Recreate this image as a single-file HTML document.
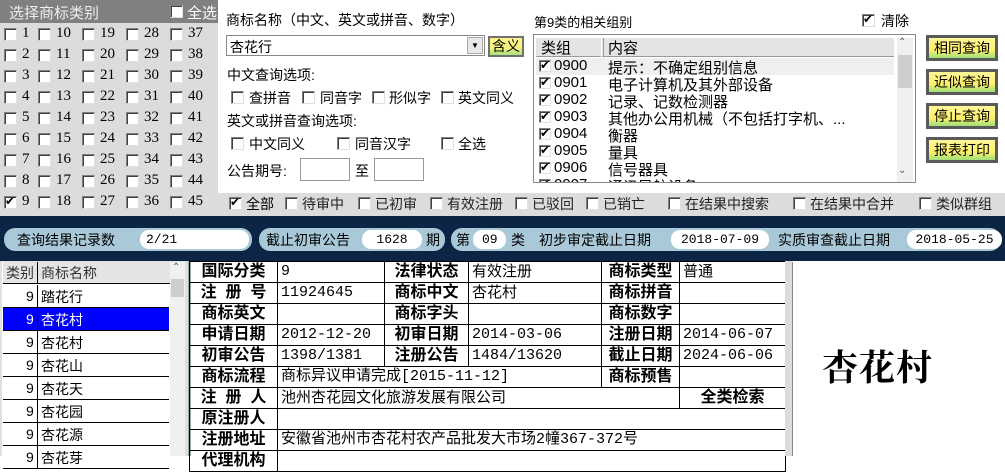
<!DOCTYPE html>
<html><head><meta charset="utf-8"><style>
*{margin:0;padding:0;box-sizing:border-box}
body{width:1005px;height:456px;overflow:hidden;position:relative;background:#fff;font-family:"Liberation Sans","Noto Sans CJK SC",sans-serif;font-size:14px;color:#000}
.a{position:absolute;white-space:nowrap}
.cb{position:absolute;width:13px;height:13px;border:1px solid #808080;border-right-color:#e0e0e0;border-bottom-color:#e0e0e0;background:#fff;box-shadow:inset 1px 1px 0 #404040}
.cb.k::after{content:"✔";position:absolute;left:0;top:-3px;font-size:12px;font-family:"DejaVu Sans",sans-serif}
.num{position:absolute;font-family:"Liberation Serif",serif;font-size:15px}
.btn{position:absolute;left:926px;width:72px;height:26px;border:3px solid #5a5a5a;background:linear-gradient(#fff79a,#fff06a 60%,#9fe07a);text-align:center;line-height:20px;font-size:14px}
.pill{position:absolute;top:228px;height:23px;background:#a9c9d9;border-radius:11px}
.fld{position:absolute;top:230px;height:19px;background:#fff;border-radius:9px;font-family:"Liberation Mono",monospace;font-size:13px;line-height:19px}
table{position:absolute;border-collapse:collapse;table-layout:fixed}
tr{height:21px}
td{border:1px solid #000;height:21px;line-height:18px;padding:0 3px;font-size:15px;white-space:nowrap;overflow:hidden}
td.l{font-weight:bold;font-size:16px;text-align:center;padding:0}
.mono{font-family:"Liberation Mono","Noto Sans CJK SC",monospace;font-size:15px}
</style></head><body>
<div class="a" style="left:0;top:0;width:218px;height:216px;background:#dcdcdc"></div>
<div class="a" style="left:0;top:0;width:218px;height:23px;background:#808080"></div>
<div class="a" style="left:9px;top:2px;color:#eee;font-size:15px">选择商标类别</div>
<div class="cb" style="left:170px;top:5px"></div>
<div class="a" style="left:187px;top:2px;color:#fff;font-size:15px">全选</div>
<div id="grid"></div>
<div class="a" style="left:226px;top:10px">商标名称（中文、英文或拼音、数字）</div>
<div class="a" style="left:226px;top:35px;width:259px;height:21px;border:1px solid #888;background:#fff"><span style="position:absolute;left:3px;top:1px">杏花行</span><span style="position:absolute;right:1px;top:1px;width:16px;height:17px;background:#e8e8e8;border:1px solid #aaa;font-size:8px;text-align:center;line-height:16px">▼</span></div>
<div class="a" style="left:488px;top:36px;width:36px;height:21px;border:2px solid #707070;background:linear-gradient(#fff48a,#f5f080 60%,#a8e080);text-align:center;line-height:17px">含义</div>
<div class="a" style="left:227px;top:65px">中文查询选项:</div>
<div class="cb" style="left:231px;top:91px"></div><div class="a" style="left:249px;top:88px">查拼音</div>
<div class="cb" style="left:302px;top:91px"></div><div class="a" style="left:320px;top:88px">同音字</div>
<div class="cb" style="left:372px;top:91px"></div><div class="a" style="left:389px;top:88px">形似字</div>
<div class="cb" style="left:441px;top:91px"></div><div class="a" style="left:458px;top:88px">英文同义</div>
<div class="a" style="left:227px;top:111px">英文或拼音查询选项:</div>
<div class="cb" style="left:231px;top:137px"></div><div class="a" style="left:249px;top:134px">中文同义</div>
<div class="cb" style="left:337px;top:137px"></div><div class="a" style="left:355px;top:134px">同音汉字</div>
<div class="cb" style="left:441px;top:137px"></div><div class="a" style="left:458px;top:134px">全选</div>
<div class="a" style="left:227px;top:161px">公告期号:</div>
<div class="a" style="left:300px;top:158px;width:50px;height:23px;border:1px solid #999;background:#fff"></div>
<div class="a" style="left:355px;top:161px">至</div>
<div class="a" style="left:374px;top:158px;width:50px;height:23px;border:1px solid #999;background:#fff"></div>
<div class="a" style="left:534px;top:12px;font-size:13px">第9类的相关组别</div>
<div class="cb k" style="left:862px;top:14px"></div><div class="a" style="left:881px;top:11px">清除</div>
<div class="a" style="left:533px;top:34px;width:383px;height:149px;border:1px solid #888;background:#fff;overflow:hidden">
 <div class="a" style="left:2px;top:3px;width:358px;height:19px;background:#e4e4e4;border-bottom:1px solid #999"></div>
 <div class="a" style="left:7px;top:2px;font-size:15px">类组</div>
 <div class="a" style="left:67px;top:3px;width:3px;height:19px;border-left:1px solid #fff;border-right:1px solid #999"></div>
 <div class="a" style="left:74px;top:2px;font-size:15px">内容</div>
 <div class="a" style="left:2px;top:23px;width:358px;height:17px;background:#efefef"></div>
 <div class="a" style="left:363px;top:3px;width:16px;height:145px;background:#f0f0f0"></div>
 <div class="a" style="left:364px;top:2px;font-size:10px;color:#555">⌃</div>
 <div class="a" style="left:364px;top:20px;width:14px;height:33px;background:#cdcdcd"></div>
 <div class="a" style="left:364px;top:130px;font-size:10px;color:#555">⌄</div>
 <div id="grp"></div>
</div>
<div class="btn" style="top:35px">相同查询</div>
<div class="btn" style="top:69px">近似查询</div>
<div class="btn" style="top:103px">停止查询</div>
<div class="btn" style="top:137px">报表打印</div>
<div class="a" style="left:218px;top:193px;width:787px;height:23px;background:#dcdcdc"></div>
<div id="flt"></div>
<div class="a" style="left:0;top:216px;width:1005px;height:45px;background:#0c2544"></div>
<div class="pill" style="left:4px;width:248px"></div>
<div class="a" style="left:17px;top:230px;font-size:14px">查询结果记录数</div>
<div class="fld" style="left:140px;width:109px;padding-left:6px">2/21</div>
<div class="pill" style="left:259px;width:186px"></div>
<div class="a" style="left:266px;top:230px">截止初审公告</div>
<div class="fld" style="left:362px;width:60px;text-align:center">1628</div>
<div class="a" style="left:426px;top:230px">期</div>
<div class="pill" style="left:451px;width:550px"></div>
<div class="a" style="left:456px;top:230px">第</div>
<div class="fld" style="left:473px;width:33px;padding-left:9px">09</div>
<div class="a" style="left:511px;top:230px">类</div>
<div class="a" style="left:539px;top:230px">初步审定截止日期</div>
<div class="fld" style="left:671px;width:98px;text-align:center">2018-07-09</div>
<div class="a" style="left:778px;top:230px">实质审查截止日期</div>
<div class="fld" style="left:907px;width:95px;text-align:center">2018-05-25</div>
<div class="a" style="left:0;top:261px;width:190px;height:195px;background:#e0e0e0"></div>
<div class="a" style="left:2px;top:262px;width:168px;height:194px;background:#fff"></div>
<div class="a" style="left:3px;top:262px;width:167px;height:22px;background:#e4e4e4;border-bottom:1px solid #000"></div>
<div class="a" style="left:6px;top:263px;color:#333">类别</div>
<div class="a" style="left:37px;top:262px;height:22px;border-left:1px solid #000"></div>
<div class="a" style="left:41px;top:263px;color:#333">商标名称</div>
<div class="a" style="left:170px;top:262px;width:15px;height:194px;background:#f0f0f0"></div>
<div class="a" style="left:172px;top:262px;font-size:10px;color:#555">⌃</div>
<div class="a" style="left:171px;top:279px;width:13px;height:18px;background:#cdcdcd"></div>
<div id="lst"></div>
<div class="a" style="left:188px;top:261px;width:3px;height:195px;background:#9aa"></div>
<table style="left:189px;top:261px;width:596px">
<colgroup><col style="width:88px"><col style="width:107px"><col style="width:84px"><col style="width:133px"><col style="width:78px"><col style="width:106px"></colgroup>
<tr><td class="l">国际分类</td><td class="mono">9</td><td class="l">法律状态</td><td>有效注册</td><td class="l">商标类型</td><td>普通</td></tr>
<tr><td class="l">注&nbsp;&nbsp;册&nbsp;&nbsp;号</td><td class="mono">11924645</td><td class="l">商标中文</td><td>杏花村</td><td class="l">商标拼音</td><td></td></tr>
<tr><td class="l">商标英文</td><td></td><td class="l">商标字头</td><td></td><td class="l">商标数字</td><td></td></tr>
<tr><td class="l">申请日期</td><td class="mono">2012-12-20</td><td class="l">初审日期</td><td class="mono">2014-03-06</td><td class="l">注册日期</td><td class="mono">2014-06-07</td></tr>
<tr><td class="l">初审公告</td><td class="mono">1398/1381</td><td class="l">注册公告</td><td class="mono">1484/13620</td><td class="l">截止日期</td><td class="mono">2024-06-06</td></tr>
<tr><td class="l">商标流程</td><td colspan="3" class="mono">商标异议申请完成[2015-11-12]</td><td class="l">商标预售</td><td></td></tr>
<tr><td class="l">注&nbsp;&nbsp;册&nbsp;&nbsp;人</td><td colspan="4">池州杏花园文化旅游发展有限公司</td><td class="l">全类检索</td></tr>
<tr><td class="l">原注册人</td><td colspan="5"></td></tr>
<tr><td class="l">注册地址</td><td colspan="5" class="mono">安徽省池州市杏花村农产品批发大市场2幢367-372号</td></tr>
<tr><td class="l">代理机构</td><td colspan="5"></td></tr>
</table>
<div class="a" style="left:785px;top:261px;width:7px;height:195px;background:#dcdcdc"></div>
<div class="a" style="left:792px;top:262px;width:213px;height:194px;background:#fff;border-left:1px solid #888"></div>
<div class="a" style="left:822px;top:340px;font-size:36px;font-weight:bold;font-family:'Noto Serif CJK SC','Noto Sans CJK SC',serif;letter-spacing:1px">杏花村</div>
<script>
var g=document.getElementById('grid'),h='';
var cx=[4,38,82,126,170];
for(var r=0;r<9;r++)for(var c=0;c<5;c++){var n=r+1+c*9,y=28+r*21;
h+='<div class="cb'+(n==9?' k':'')+'" style="left:'+cx[c]+'px;top:'+y+'px"></div><div class="num" style="left:'+(cx[c]+18)+'px;top:'+(y-3)+'px">'+n+'</div>';}
g.innerHTML=h;
var gr=[['0900','提示：不确定组别信息'],['0901','电子计算机及其外部设备'],['0902','记录、记数检测器'],['0903','其他办公用机械（不包括打字机、...'],['0904','衡器'],['0905','量具'],['0906','信号器具'],['0907','通讯导航设备']];
h='';gr.forEach(function(v,i){var y=24+i*17;h+='<div class="cb k" style="left:5px;top:'+(y+1)+'px;width:12px;height:12px"></div><div class="a" style="left:20px;top:'+(y-2)+'px;font-size:15px">'+v[0]+'</div><div class="a" style="left:74px;top:'+(y-2)+'px;font-size:15px">'+v[1]+'</div>';});
document.getElementById('grp').innerHTML=h;
var f=[[229,'全部',1],[285,'待审中'],[358,'已初审'],[430,'有效注册'],[515,'已驳回'],[586,'已销亡'],[668,'在结果中搜索'],[793,'在结果中合并'],[919,'类似群组']];
h='';f.forEach(function(v){h+='<div class="cb'+(v[2]?' k':'')+'" style="left:'+v[0]+'px;top:197px"></div><div class="a" style="left:'+(v[0]+17)+'px;top:194px;color:'+(v[2]?'#000':'#222')+'">'+v[1]+'</div>';});
document.getElementById('flt').innerHTML=h;
var l=['踏花行','杏花村','杏花村','杏花山','杏花天','杏花园','杏花源','杏花芽'];
h='';l.forEach(function(v,i){var y=285+i*23,s=i==1;
h+='<div class="a" style="left:3px;top:'+y+'px;width:166px;height:23px;'+(s?'background:#0000ff;':'')+'border-bottom:1px solid #000"></div><div class="a" style="left:37px;top:'+y+'px;height:23px;border-left:1px solid #000"></div><div class="a" style="left:26px;top:'+(y+3)+'px;color:'+(s?'#fff':'#000')+'">9</div><div class="a" style="left:41px;top:'+(y+2)+'px;font-size:14px;color:'+(s?'#fff':'#000')+'">'+v+'</div>';});
document.getElementById('lst').innerHTML=h;
</script>
</body></html>
